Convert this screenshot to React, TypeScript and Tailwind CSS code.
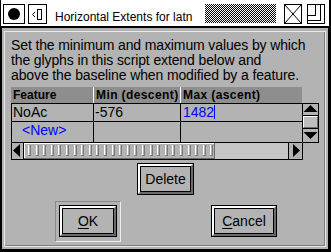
import React from "react";

function Btn({ className, children }: { className: string; children: React.ReactNode }) {
  return (
    <div className={"h-[32px] border border-black " + className}>
      <div className="w-full h-full border-t-2 border-l-2 border-b-2 border-r-2 border-t-white border-l-white border-b-[#6b6b6b] border-r-[#6b6b6b]">
        <div className="w-full h-full border border-black bg-[#b3b3b3] flex items-center justify-center text-[14px] leading-[16px] text-black">
          {children}
        </div>
      </div>
    </div>
  );
}

export default function App() {
  const slots = Array.from({ length: 25 }, (_, i) => Math.round(4 + i * 7.6));
  return (
    <div className="w-[331px] h-[252px] bg-black overflow-hidden font-['Liberation_Sans',Arial,sans-serif]">
      {/* Title bar */}
      <div className="ml-[1px] w-[328px] h-[26px] bg-white flex items-start pt-[4px]">
        <div className="ml-[2px] w-[22px] h-[20px] border border-black bg-white flex items-center justify-center">
          <div className="w-[12px] h-[12px] rounded-full bg-black" />
        </div>
        <div className="ml-[3px] w-[19px] h-[20px] border border-black bg-white">
          <svg width="17" height="18" className="block">
            <rect x="8.5" y="4.5" width="4" height="10" fill="none" stroke="#000" strokeWidth="1" />
            <polyline points="6,7 3.5,9.5 6,12" fill="none" stroke="#000" strokeWidth="1" />
          </svg>
        </div>
        <div className="ml-[8px] mt-[3px] w-[150px] h-[17px] text-[12px] leading-[20px] text-black whitespace-nowrap">
          Horizontal Extents for latn
        </div>
        <svg width="71" height="19" className="block" shapeRendering="crispEdges">
          <defs>
            <pattern id="chk" width="2" height="2" patternUnits="userSpaceOnUse">
              <rect width="2" height="2" fill="#fff" />
              <rect width="1" height="1" fill="#000" />
              <rect x="1" y="1" width="1" height="1" fill="#000" />
            </pattern>
          </defs>
          <rect width="71" height="19" fill="url(#chk)" />
        </svg>
        <div className="ml-[8px] w-[18px] h-[20px] border border-black bg-white">
          <svg width="16" height="18" className="block">
            <line x1="0" y1="0" x2="16" y2="18" stroke="#000" strokeWidth="1" />
            <line x1="16" y1="0" x2="0" y2="18" stroke="#000" strokeWidth="1" />
          </svg>
        </div>
        <div className="ml-[5px] w-[18px] h-[20px] border border-black bg-white">
          <svg width="16" height="18" className="block" shapeRendering="crispEdges">
            <path d="M7.5 0 V10.5 H0" fill="none" stroke="#000" strokeWidth="1" />
            <path d="M12.5 0 V15.5 H0" fill="none" stroke="#000" strokeWidth="1" />
          </svg>
        </div>
      </div>

      {/* Body */}
      <div className="mt-[2px] ml-[2px] w-[326px] h-[221px] bg-[#b3b3b3] pt-[3px] pl-[2px]">
        <div className="w-[322px] h-[216px] border border-[#e8e8e8]">
          <div className="w-full h-full border-r border-b border-[#7f7f7f] pl-[6px] pt-[6px]">
            <div className="text-[14px] leading-[15px] tracking-[-0.12px] text-black whitespace-nowrap">
              <div>Set the minimum and maximum values by which</div>
              <div>the glyphs in this script extend below and</div>
              <div>above the baseline when modified by a feature.</div>
            </div>

            {/* Table */}
            <div className="mt-[4px] w-[308px]">
              <div className="flex items-start">
                <div className="w-[291px]">
                  <div className="h-[16px] bg-[#8e8e8e] flex text-[12px] leading-[16px] font-bold text-black whitespace-nowrap">
                    <div className="w-[82px] pl-[2px]">Feature</div>
                    <div className="w-[1px] bg-white" />
                    <div className="w-[86px] pl-[2px] tracking-[0.4px]">Min (descent)</div>
                    <div className="w-[1px] bg-white" />
                    <div className="w-[121px] pl-[2px] tracking-[0.4px]">Max (ascent)</div>
                  </div>
                  <div className="border-t border-l border-black text-[14px] leading-[16px] whitespace-nowrap">
                    <div className="h-[18px] border-b border-black flex">
                      <div className="w-[81px] pl-[1px] text-black">NoAc</div>
                      <div className="w-[1px] bg-black" />
                      <div className="w-[86px] pl-[1px] text-black">-576</div>
                      <div className="w-[1px] bg-black" />
                      <div className="w-[121px] pl-[2px] text-[#0000ff] flex items-start">
                        <span>1482</span>
                        <span className="inline-block w-[1px] h-[14px] mt-[1px] bg-[#0000ff]" />
                      </div>
                    </div>
                    <div className="h-[21px] border-b border-black flex">
                      <div className="w-[81px] pl-[10px] text-[#0000ff]">&lt;New&gt;</div>
                      <div className="w-[1px] bg-black" />
                      <div className="w-[86px]" />
                      <div className="w-[1px] bg-black" />
                      <div className="w-[121px]" />
                    </div>
                  </div>
                </div>
                {/* vertical scrollbar */}
                <div className="mt-[16px] w-[17px] h-[40px] border border-black flex flex-col">
                  <div className="h-[12px] border-b border-black">
                    <svg width="15" height="12" className="block">
                      <polygon points="7.5,1 14.5,8 0.5,8" fill="#000" />
                    </svg>
                  </div>
                  <div className="h-[13px] border-b border-black">
                    <div className="w-full h-[12px] border-t border-l border-white border-b border-r border-b-[#6b6b6b] border-r-[#6b6b6b] bg-[#bdbdbd]" />
                  </div>
                  <div className="h-[12px]">
                    <svg width="15" height="12" className="block">
                      <polygon points="0.5,3 14.5,3 7.5,10" fill="#000" />
                    </svg>
                  </div>
                </div>
              </div>
              {/* horizontal scrollbar */}
              <div className="w-[292px] h-[17px] border-l border-r border-b border-black flex">
                <div className="w-[12px] h-full border-r border-black">
                  <svg width="11" height="16" className="block">
                    <polygon points="1,7.5 8,1 8,14" fill="#000" />
                  </svg>
                </div>
                <div className="w-[264px] h-full flex">
                  <svg width="191" height="16" className="block" shapeRendering="crispEdges">
                    <rect x="0" y="0" width="191" height="16" fill="#b3b3b3" />
                    <rect x="0" y="0" width="191" height="1" fill="#ffffff" />
                    <rect x="0" y="0" width="1" height="16" fill="#ffffff" />
                    <rect x="0" y="15" width="191" height="1" fill="#6b6b6b" />
                    <rect x="190" y="0" width="1" height="16" fill="#6b6b6b" />
                    {slots.map((x) => (
                      <g key={x}>
                        <rect x={x} y="2" width="1" height="11" fill="#ffffff" />
                        <rect x={x + 2} y="2" width="1" height="11" fill="#7a7a7a" />
                        <rect x={x} y="12" width="3" height="1" fill="#7a7a7a" />
                      </g>
                    ))}
                  </svg>
                  <div className="flex-1 h-full bg-[#c6c6c6]" />
                </div>
                <div className="w-[14px] h-full border-l border-black">
                  <svg width="13" height="16" className="block">
                    <polygon points="4,1 11,7.5 4,14" fill="#000" />
                  </svg>
                </div>
              </div>
            </div>

            {/* Delete */}
            <div className="mt-[3px] ml-[126px]">
              <Btn className="w-[57px]">Delete</Btn>
            </div>

            {/* OK / Cancel */}
            <div className="mt-[6px] flex items-start">
              <div className="ml-[44px] w-[66px] h-[41px] border-t border-l border-[#8a8a8a] border-b border-r border-b-[#ececec] border-r-[#ececec] pt-[3px] pl-[3px]">
                <Btn className="w-[58px]">
                  <span>
                    <span className="underline underline-offset-[2px]">O</span>K
                  </span>
                </Btn>
              </div>
              <div className="ml-[90px] mt-[4px]">
                <Btn className="w-[66px]">
                  <span>
                    <span className="underline underline-offset-[2px]">C</span>ancel
                  </span>
                </Btn>
              </div>
            </div>
          </div>
        </div>
      </div>
    </div>
  );
}
